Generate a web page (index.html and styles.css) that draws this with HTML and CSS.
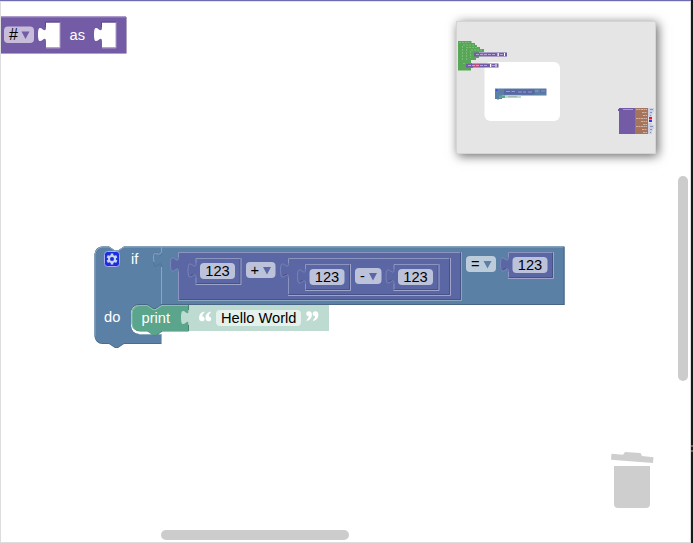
FILE: index.html
```html
<!DOCTYPE html>
<html lang="en">
<head>
<meta charset="utf-8">
<title>Block workspace</title>
<link rel="stylesheet" href="styles.css">
</head>
<body>
<main class="workspace">
<svg class="canvas" width="693" height="543" viewBox="0 0 693 543">
  <defs>
    <path id="tab" d="M0,20c0,-10 -8,8 -8,-7.500s8,2.500 8,-7.500"/>
    <g id="num">
      <path class="math" d="M0,0H45V26H0V20c0,-10 -8,8 -8,-7.500s8,2.500 8,-7.500z"/>
      <use class="light soft" href="#tab" x=".5"/>
      <path class="light" d="M.5,25.500V20M.5,5V.5H44.500"/>
      <path class="dark" d="M44.500,1V25.500H1M-5,17.500l3,-1.200"/>
      <path class="rim" d="M45.500,0V26.500H0"/>
      <rect class="field" x="4.500" y="5" width="35" height="16" rx="4"/>
      <text x="22" y="18" text-anchor="middle">123</text>
    </g>
    <path id="arrow" d="M0,0H8L4,7.500z"/>
  </defs>

  <!-- list block -->
  <path fill="#5d4984" d="M1,17H126.500V53.500H1z"/>
  <path fill="#745ba5" d="M1,16.500H126V53H1z"/>
  <path stroke="#9e8cc0" fill="none" d="M1,17H126"/>
  <g class="socket">
    <path d="M46,22.500H60V47.500H46V42c0,-10 -8,8 -8,-7.500s8,2.500 8,-7.500z"/>
    <path d="M102,22.500H116V47.500H102V42c0,-10 -8,8 -8,-7.500s8,2.500 8,-7.500z"/>
  </g>
  <path fill="none" stroke="#a99ac8" d="M46,48H60V22M102,48H116V22"/>
  <path fill="none" stroke="#5d4984" d="M45.500,27V22H60M101.500,27V22H116"/>
  <rect class="field list" x="4" y="26.500" width="30" height="16.500" rx="4"/>
  <text class="hash" x="9" y="40">#</text>
  <use href="#arrow" x="21.500" y="31.500" fill="#745ba5"/>
  <text class="label" x="69.500" y="40">as</text>

  <!-- if block -->
  <path fill="#496684" d="M94.500,254.500a8,8 0 0 1 8,-8H109l6,4h3l6,-4H564.500V305H162l-6,4h-3l-6,-4h-8a8,8 0 0 0 -8,8v13a8,8 0 0 0 8,8H161.500V344H124l-6,4h-3l-6,-4H102.500a8,8 0 0 1 -8,-8z"/>
  <path fill="#5b80a5" d="M94.500,254.500a8,8 0 0 1 8,-8H109l6,4h3l6,-4H564V304H162l-6,4h-3l-6,-4h-8a8,8 0 0 0 -8,8v14a8,8 0 0 0 8,8H161V343.200H124l-6,4h-3l-6,-4H102.500a8,8 0 0 1 -8,-8z"/>
  <path fill="none" stroke="#8ca6c0" d="M95,336V254.500a8,8 0 0 1 8,-7.500H109l6,4h3l6,-4H563.500M139,334.500H161"/>
  <use href="#tab" x="161.500" y="247" fill="none" stroke="#496684" opacity=".45"/>
  <path fill="none" stroke="#8ca6c0" d="M161.500,304V267M154,262q-1.500,-9 1.500,-8.500q6,2 6,-2V247"/>
  <path fill="none" stroke="#496684" d="M161.500,304.500H564M564,247V305"/>
  <rect x="104.500" y="251.500" width="15" height="15" rx="3" fill="#1b2edc" stroke="#aaa9f3"/>
  <g fill="#c8d3ed" transform="translate(112 259)">
    <path d="M-1.300,-5.500H1.300V5.500H-1.300z"/>
    <path transform="rotate(60)" d="M-1.300,-5.500H1.300V5.500H-1.300z"/>
    <path transform="rotate(120)" d="M-1.300,-5.500H1.300V5.500H-1.300z"/>
    <circle r="4"/><circle r="2" fill="#1b2edc"/>
  </g>
  <text class="label" x="131" y="264">if</text>
  <text class="label" x="104" y="322">do</text>

  <!-- outer sum -->
  <path class="math" d="M178.500,252H461V300H178.500V272c0,-10 -8,8 -8,-7.500s8,2.500 8,-7.500z"/>
  <use class="light soft" href="#tab" x="178.500" y="252"/>
  <path class="light" d="M178.500,299.500V272M178.500,257V252.500H460"/>
  <path class="dark" d="M460.500,253V299.500H180"/>
  <path fill="none" stroke="#8ca6c0" d="M461.500,252V300.500H178"/>
  <use href="#num" x="195.500" y="258"/>
  <rect class="field" x="246" y="262" width="29.500" height="16" rx="4"/>
  <text x="250.500" y="274.500">+</text>
  <use class="math" href="#arrow" x="263" y="267"/>

  <!-- inner difference -->
  <use class="light soft" href="#tab" x="288.500" y="258"/>
  <path class="light" d="M288.500,294V278M288.500,263V258.500H449"/>
  <path class="dark" d="M449.500,259V294.500H289M283,275.500l4,-1.500"/>
  <path class="rim" d="M450.500,258V295.500H288"/>
  <use href="#num" x="305" y="264"/>
  <rect class="field" x="355" y="268" width="26.500" height="16" rx="4"/>
  <text x="360" y="281">-</text>
  <use class="math" href="#arrow" x="369" y="273"/>
  <use href="#num" x="393.500" y="264"/>

  <!-- comparison -->
  <rect class="field logic" x="466" y="256" width="30" height="16" rx="4"/>
  <text x="471" y="269">=</text>
  <use href="#arrow" x="483.500" y="261" fill="#5b80a5"/>
  <use href="#num" x="508" y="252"/>

  <!-- print statement -->
  <path fill="#498470" d="M132,313a8,8 0 0 1 8,-8H148l6,4h3l6,-4H188.500V331.500H162.500l-6,4h-3l-6,-4h-7.500a8,8 0 0 1 -8,-8z"/>
  <path fill="#5ba58c" d="M131.500,313a8,8 0 0 1 8,-8H147l6,4h3l6,-4H188V331H162l-6,4h-3l-6,-4h-7.500a8,8 0 0 1 -8,-8z"/>
  <path fill="none" stroke="#8cc0ae" d="M134,329a8,8 0 0 1 -2,-5V313.500a8,8 0 0 1 8,-8H147l6,4h3l6,-4H188"/>
  <text class="label" x="141.500" y="323">print</text>
  <path fill="#bddbd1" d="M189,305H329V331H189V325c0,-10 -8,8 -8,-7.500s8,2.500 8,-7.500z"/>
  <path fill="none" stroke="#498470" d="M188.500,305V310M188.500,325V331"/>
  <rect x="216" y="310" width="85" height="16" rx="4" fill="#e5f1ed"/>
  <text x="221" y="323">Hello World</text>
  <g fill="#fff">
    <path id="quote" d="M204,311.500C200.500,312.500 199,315 199,318C199,320.300 200.300,321.300 202,321.300Q204.700,321.200 204.700,318.700Q204.500,316.500 202.300,316.500Q202,314 204.500,312.300zM210.500,311.500C207,312.500 205.500,315 205.500,318C205.500,320.300 206.800,321.300 208.500,321.300Q211.200,321.200 211.200,318.700Q211,316.500 208.800,316.500Q208.500,314 211,312.300z"/>
    <use href="#quote" transform="rotate(180 258.700 316.300)"/>
  </g>

  <!-- trash can and scrollbars -->
  <g fill="#cecece">
    <path d="M614,466H650V504a4,4 0 0 1 -4,4H618a4,4 0 0 1 -4,-4z"/>
    <path d="M611.500,453.800L623,454.700L625,452L640.500,453L642,456L653.500,457.200L653,463L611,459.700z"/>
    <rect x="678" y="176" width="10" height="205" rx="5" fill="#ccc"/>
    <rect x="161" y="530" width="188" height="10" rx="5" fill="#ccc"/>
  </g>
  <path fill="#ddd" d="M0,1H1V543H0zM690,1H691V543H690zM0,542H691V543H0z"/>
  <path fill="#191919" d="M691,0H693V543H691z"/>
  <path fill="#6e6cb2" d="M0,0H691V1H0z"/>
  <path fill="#e1e1ef" d="M0,1H691V2H0z"/>
  <path fill="#80604e" d="M691,445h2v2h-2zM691,450h2v2h-2z"/>
</svg>

<aside class="minimap">
<svg width="200" height="133" viewBox="456 21 200 133">
  <rect x="484.500" y="62" width="75.500" height="59" rx="6" fill="#fff"/>
  <path fill="#57a757" d="M458,41H471.500V43H475V45H477V47H480V49H484V52H479V58H476V60H471V63H472V65H473V68H471V70.500H458z"/>
  <g fill="none" stroke="#8ac48a" stroke-width=".7" stroke-dasharray="2 1">
    <path d="M459,42.500H469M463,45H474M466,47.500H477M471,50H482M463,63.500H471"/>
    <path d="M462.500,46V61M466.500,49V60M470.500,51V58"/>
  </g>
  <path fill="#745ba5" d="M474,52.500H507V56.500H474zM466,63.500H498.500V67.500H466z"/>
  <path fill="#b95084" d="M481,53h6v3h-6zM473,64h6v3h-6z"/>
  <path stroke="#b7a7d3" d="M476,54.500H495M500,54.500H504M468,65.500H487M492,65.500H496" stroke-dasharray="3 1"/>
  <path fill="#fff" d="M497.500,53h1.300v3h-1.300zM504,53h1v3h-1zM490,64h1.300v3H490zM495.500,64h1v3h-1z"/>
  <path fill="#5b80a5" d="M495,88.500H546.500V95.500H502V98.500H502V99H499l-1,1l-1,-1H495z"/>
  <path fill="#5b67a5" d="M504,89.500H534.500V94.500H504zM540,89.500h5.500v3H540z"/>
  <path fill="#5ba58c" d="M499,95.500H505V98H499z"/>
  <path fill="#bddbd1" d="M505,95.500H521V98H505z"/>
  <path fill="none" stroke="#969dc8" d="M506,91.500H510M511.500,91.500H515M518,92H522M523,92H526M528,92H532M535,91H538.500M541,91H545"/>
  <path stroke="#809991" stroke-width=".6" d="M508,96.700H517"/>
  <path fill="#3448df" d="M496,89.500h1.500v1.500H496z"/>
  <path fill="#745ba5" d="M619,108H635V134H619zM618,109h1v2h-1z"/>
  <path fill="#a5745b" d="M635,108H648V134H635z"/>
  <path stroke="#aa9bc9" d="M623,109.500H633"/>
  <path stroke="#5657c9" stroke-width="1.500" d="M619,109.500H622"/>
  <path stroke="#cfb4a6" stroke-dasharray="2 .5" d="M636,109.500H647M642,112.500H647M643,115.500H647M636,118.500H647M641,121.500H647M643,124.500H647M636,126.500H647M642,129.500H647M643,132.500H647"/>
  <path fill="#ccd0e4" d="M648,108h6v3l-2,3v3h-4zM648,123h4v2h2v3l-2,3v3h-4z"/>
  <path stroke="#8791ba" d="M650,109.500h3M650,112.500h2M650,115.500h1M650,126.500h3M650,129.500h2M650,132.500h1"/>
  <path fill="#f11" d="M649,117h3v2.500h-3z"/>
  <path fill="#33f" d="M649,120h3v2h-3z"/>
</svg>
</aside>
</main>
</body>
</html>
```

FILE: styles.css
```css
body {
  margin: 0;
  background: #fff;
}

.workspace {
  position: relative;
  width: 693px;
  height: 543px;
  overflow: hidden;
}

.canvas {
  display: block;
}

.canvas text {
  font: 14.667px "Liberation Sans", Arial, sans-serif;
  fill: #000;
}

.canvas .label {
  fill: #fff;
}

.canvas .hash {
  font-size: 16px;
}

.math {
  fill: #5b67a5;
}

.light,
.dark,
.rim {
  fill: none;
  stroke: #8c94c0;
}

.dark {
  stroke: #495284;
}

.rim {
  stroke: #9da3c9;
}

.soft {
  opacity: 0.6;
}

.field {
  fill: #bdc2db;
}

.field.logic {
  fill: #bdccdb;
}

.field.list {
  fill: #c7bddb;
}

.socket {
  fill: #fff;
}

.minimap {
  position: absolute;
  left: 456px;
  top: 21px;
  width: 200px;
  height: 133px;
  background: #e5e5e5;
  box-shadow: inset 0 0 0 1px #d4d4d4, 2px 2px 10px rgba(0, 0, 0, 0.6);
}

.minimap svg {
  display: block;
}
```
